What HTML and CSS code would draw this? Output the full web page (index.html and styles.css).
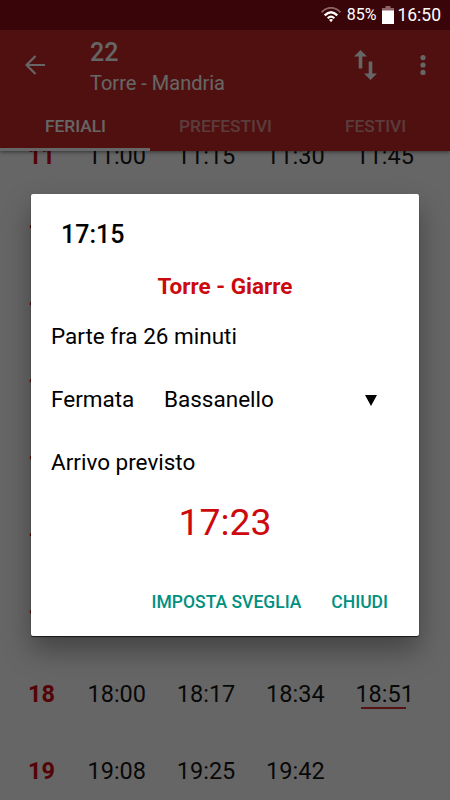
FILE: index.html
```html
<!DOCTYPE html>
<html lang="it">
<head>
<meta charset="utf-8">
<title>22 Torre - Mandria</title>
<link rel="stylesheet" href="styles.css">
</head>
<body>
<div class="screen">
  <div class="statusbar">
    <svg class="wifi" width="20" height="16" viewBox="0 0 20 16" fill="none" stroke-width="2">
      <path d="M.6 5.2C6-.6 14-.6 19.400 5.200" stroke="#8c6366"/>
      <path d="M3.700 8.300Q10 2 16.300 8.300" stroke="#fff" stroke-width="2.400"/>
      <path d="M6.700 11.200Q10 8 13.300 11.200" stroke="#fff" stroke-width="2.200"/>
      <path d="M8 12.800Q10 11 12 12.800L10 15.200Z" fill="#fff"/>
    </svg>
    <span class="percent">85%</span>
    <svg class="battery" width="12" height="18" viewBox="0 0 12 18">
      <path d="M3.500 0h5v2H12v3H0V2h3.500z" fill="#8c6366"/>
      <path d="M0 4.500h12V18H0z" fill="#fff"/>
    </svg>
    <span class="clock">16:50</span>
  </div>
  <div class="appbar">
    <div class="toolbar">
      <svg class="back" width="20" height="20" viewBox="0 0 20 20" fill="none" stroke="#fff" stroke-width="2.200"><path d="M20 10H2M10.500 1L1.500 10l9 9"/></svg>
      <div class="titles">
        <div class="line">22</div>
        <div class="route">Torre - Mandria</div>
      </div>
      <svg class="swap" width="23" height="30" viewBox="0 0 23 30" fill="#fff"><path d="M6.500 0L13 6.500H8.300V18.500H4.700V6.500H0zM14.700 11.500h3.600v12H23L16.500 30 10 23.500h4.700z"/></svg>
      <svg class="more" width="6" height="20" viewBox="0 0 6 20" fill="#fff"><circle cx="3" cy="2.600" r="2.600"/><circle cx="3" cy="10" r="2.600"/><circle cx="3" cy="17.400" r="2.600"/></svg>
    </div>
    <div class="tabs">
      <div class="tab active">FERIALI</div>
      <div class="tab">PREFESTIVI</div>
      <div class="tab">FESTIVI</div>
    </div>
  </div>
  <div class="list">
    <div class="row first"><b>11</b><span>11:00</span><span>11:15</span><span>11:30</span><span>11:45</span></div>
    <div class="row"><b>12</b></div>
    <div class="row"><b>13</b></div>
    <div class="row"><b>14</b></div>
    <div class="row"><b>15</b></div>
    <div class="row"><b>16</b></div>
    <div class="row"><b>17</b></div>
    <div class="row"><b>18</b><span>18:00</span><span>18:17</span><span>18:34</span><span class="marked">18:51</span></div>
    <div class="row"><b>19</b><span>19:08</span><span>19:25</span><span>19:42</span></div>
  </div>
  <div class="scrim">
    <div class="dialog">
      <div class="title">17:15</div>
      <div class="direction">Torre - Giarre</div>
      <div class="text departs">Parte fra 26 minuti</div>
      <div class="text stop"><span class="label">Fermata</span><span class="value">Bassanello</span><i class="caret"></i></div>
      <div class="text arrival">Arrivo previsto</div>
      <div class="time">17:23</div>
      <div class="actions"><span class="alarm">IMPOSTA SVEGLIA</span><span>CHIUDI</span></div>
    </div>
  </div>
</div>
</body>
</html>
```
FILE: styles.css
```css
* { box-sizing: border-box; }
body { margin: 0; font-family: Roboto, "Liberation Sans", sans-serif; }
.screen {
  position: relative; width: 450px; height: 800px; overflow: hidden;
  background: #fff; display: flex; flex-direction: column;
}
.statusbar {
  position: relative; z-index: 3; height: 30px; flex: none; background: #390509; color: #fff;
  display: flex; align-items: center; justify-content: flex-end; padding-right: 9px;
}
.wifi { margin-right: 6px; }
.percent { font-size: 16px; line-height: 34px; margin-right: 6px; }
.battery { margin-right: 3px; }
.clock { font-size: 17.500px; line-height: 34px; }
.appbar {
  position: relative; z-index: 1; height: 121px; flex: none; background: #c82829; color: #fff;
  box-shadow: 0 1px 4px rgba(0, 0, 0, .5);
}
.toolbar { height: 70px; display: flex; align-items: center; padding: 0 24px 0 25px; }
.back { margin-right: 45px; }
.titles { flex: 1; padding-top: 5px; }
.line { font-size: 25px; font-weight: 500; line-height: 30px; }
.route { font-size: 20px; line-height: 30px; }
.swap { margin-right: 43px; }
.tabs { display: grid; grid-template-columns: repeat(3, 150px); grid-template-rows: 51px; }
.tab { padding: 7px 0 0 1px; font-size: 17.300px; font-weight: 500; line-height: 39px; text-align: center; color: rgba(255, 255, 255, .5); }
.active { color: #fff; border-bottom: 3px solid #fff; }
.list { flex: 1; overflow: hidden; }
.row {
  height: 77px; padding-left: 28px; display: grid; align-items: center;
  grid-template-columns: 59.500px repeat(4, 89.300px); font-size: 23.500px; color: #161616;
}
.first { margin-top: -35px; padding-top: 2px; }
.row b { color: #d10a10; font-weight: 700; }
.marked { position: relative; }
.marked::after {
  content: ""; position: absolute; left: 6px; top: 27px; width: 45px; height: 2px; background: #d13030;
}
.scrim { position: absolute; inset: 0; z-index: 2; background: rgba(0, 0, 0, .6); padding: 194px 31px 0; }
.dialog {
  height: 442px; background: #fff; border-radius: 2px; color: #000;
  box-shadow: 0 1px 1px rgba(0, 0, 0, .7), 0 14px 28px rgba(0, 0, 0, .35);
  display: flex; flex-direction: column;
}
.title { font-size: 25px; font-weight: 500; line-height: 30px; margin: 26px 0 0 30px; }
.direction { color: #cc0a0d; font-size: 22.500px; font-weight: 700; line-height: 30px; text-align: center; margin-top: 21px; }
.text { font-size: 22.500px; line-height: 26px; padding-left: 20px; }
.departs { margin-top: 22px; }
.stop { display: flex; align-items: center; margin-top: 37px; }
.label { width: 113px; }
.value { width: 201px; }
.caret { margin-top: 2px; border: solid transparent; border-width: 11px 6.500px 0; border-top-color: #000; }
.arrival { margin-top: 37px; }
.time { color: #cc0a0d; font-size: 37.300px; line-height: 46px; text-align: center; margin-top: 24px; }
.actions {
  display: flex; justify-content: flex-end; padding-right: 31px; margin-top: 42px;
  color: #009080; font-size: 17.500px; font-weight: 500; line-height: 30px;
}
.alarm { margin-right: 30px; }
```
